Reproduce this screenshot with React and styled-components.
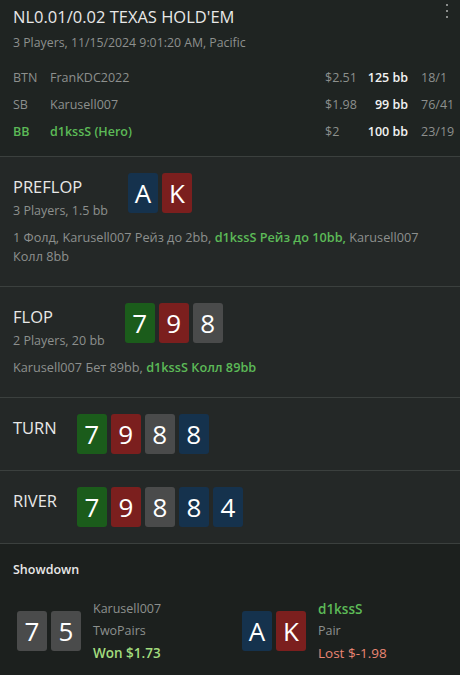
import React from "react"
import styled, { createGlobalStyle } from "styled-components"

const colors = {
  header: "#1f2422",
  street: "#242827",
  showdown: "#1c201e",
  divider: "#3b403e",
  text: "#e8e8e8",
  muted: "#8d908e",
  hero: "#5cba57",
  won: "#a3dd7e",
  lost: "#ea8674",
}

const cardColors = {
  blue: "#15324d",
  red: "#7b1f1e",
  green: "#1b5c1b",
  gray: "#4a4b4b",
}

const GlobalStyle = createGlobalStyle`
  html, body {
    margin: 0;
    padding: 0;
    background: ${colors.street};
  }
  body {
    font-family: "Open Sans", "Noto Sans", sans-serif;
    color: ${colors.text};
  }
`

const Page = styled.div`
  width: 460px;
  height: 675px;
  overflow: hidden;
  display: flex;
  flex-direction: column;
  background: ${colors.street};
`

const Header = styled.header`
  position: relative;
  background: ${colors.header};
  padding: 6px 13px 11px;
  border-bottom: 1px solid ${colors.divider};
`

const Title = styled.h1`
  margin: 0;
  font-size: 16.5px;
  font-weight: 400;
  line-height: 22px;
  color: ${colors.text};
`

const Subtitle = styled.div`
  margin-top: 7px;
  font-size: 12.3px;
  line-height: 16px;
  color: ${colors.muted};
`

const MenuDots = styled.div`
  position: absolute;
  top: 4px;
  right: 12px;
  display: flex;
  flex-direction: column;
  gap: 4px;

  span {
    width: 2px;
    height: 2px;
    background: #8a8d8b;
  }
`

const PlayerTable = styled.div`
  margin-top: 13px;
  display: grid;
  grid-template-columns: 37px 1fr 42px 54px 26px;
  grid-auto-rows: 27px;
  align-items: center;
  font-size: 12.5px;
`

const Cell = styled.div`
  color: ${(p) => (p.hero ? colors.hero : colors.muted)};
  font-weight: ${(p) => (p.hero ? 600 : 400)};
  white-space: nowrap;
`

const BB = styled.div`
  color: #f2f2f2;
  font-weight: 600;
  text-align: right;
  padding-right: 13px;
  white-space: nowrap;
`

const Street = styled.section`
  padding: 16px 13px ${(p) => (p.hasActions ? "20px" : "16px")};
  border-bottom: 1px solid ${colors.divider};
`

const StreetHead = styled.div`
  display: flex;
  align-items: flex-start;
  gap: 20px;
`

const StreetInfo = styled.div`
  padding-top: 3px;
`

const StreetName = styled.div`
  font-size: 16.5px;
  line-height: 22px;
  color: ${colors.text};
`

const StreetSub = styled.div`
  margin-top: 5px;
  font-size: 12.5px;
  line-height: 16px;
  color: ${colors.muted};
`

const Cards = styled.div`
  display: flex;
  gap: 4px;
`

const Card = styled.div`
  width: 30px;
  height: 40px;
  border-radius: 3px;
  background: ${(p) => cardColors[p.suit]};
  color: #fff;
  display: flex;
  align-items: center;
  justify-content: center;
  font-size: 26px;
  line-height: 1;
`

const Actions = styled.div`
  margin-top: 9px;
  padding-right: 22px;
  font-size: 12.7px;
  line-height: 19px;
  color: ${colors.muted};

  b {
    color: ${colors.hero};
    font-weight: 600;
  }
`

const Showdown = styled.section`
  flex: 1;
  background: ${colors.showdown};
  padding: 17px 13px 0;
`

const ShowdownTitle = styled.div`
  font-size: 12.5px;
  font-weight: 600;
  color: ${colors.text};
`

const ShowdownGrid = styled.div`
  margin-top: 20px;
  display: grid;
  grid-template-columns: 225px 1fr;
`

const ShowdownPlayer = styled.div`
  display: flex;
  align-items: center;
  gap: 12px;
  padding-left: 4px;
`

const ShowdownInfo = styled.div`
  display: flex;
  flex-direction: column;
  font-size: 12.5px;
  line-height: 22px;
`

const Line = styled.div`
  color: ${(p) => p.color || colors.muted};
  font-weight: ${(p) => (p.bold ? 600 : 400)};
  font-size: ${(p) => (p.big ? "13.5px" : "12.5px")};
`

const players = [
  { pos: "BTN", name: "FranKDC2022", stack: "$2.51", bb: "125 bb", stat: "18/1" },
  { pos: "SB", name: "Karusell007", stack: "$1.98", bb: "99 bb", stat: "76/41" },
  { pos: "BB", name: "d1kssS (Hero)", stack: "$2", bb: "100 bb", stat: "23/19", hero: true },
]

const streets = [
  {
    name: "PREFLOP",
    sub: "3 Players, 1.5 bb",
    cards: [["A", "blue"], ["K", "red"]],
    actions: (
      <>
        1 Фолд, Karusell007 Рейз до 2bb, <b>d1kssS Рейз до 10bb,</b> Karusell007 Колл 8bb
      </>
    ),
  },
  {
    name: "FLOP",
    sub: "2 Players, 20 bb",
    cards: [["7", "green"], ["9", "red"], ["8", "gray"]],
    actions: (
      <>
        Karusell007 Бет 89bb, <b>d1kssS Колл 89bb</b>
      </>
    ),
  },
  {
    name: "TURN",
    cards: [["7", "green"], ["9", "red"], ["8", "gray"], ["8", "blue"]],
  },
  {
    name: "RIVER",
    cards: [["7", "green"], ["9", "red"], ["8", "gray"], ["8", "blue"], ["4", "blue"]],
  },
]

function CardRow({ cards }) {
  return (
    <Cards>
      {cards.map(([rank, suit], i) => (
        <Card key={i} suit={suit}>{rank}</Card>
      ))}
    </Cards>
  )
}

export default function App() {
  return (
    <Page>
      <GlobalStyle />
      <Header>
        <Title>NL0.01/0.02 TEXAS HOLD'EM</Title>
        <Subtitle>3 Players, 11/15/2024 9:01:20 AM, Pacific</Subtitle>
        <MenuDots>
          <span />
          <span />
          <span />
        </MenuDots>
        <PlayerTable>
          {players.map((p) => (
            <React.Fragment key={p.pos}>
              <Cell hero={p.hero}>{p.pos}</Cell>
              <Cell hero={p.hero}>{p.name}</Cell>
              <Cell>{p.stack}</Cell>
              <BB>{p.bb}</BB>
              <Cell>{p.stat}</Cell>
            </React.Fragment>
          ))}
        </PlayerTable>
      </Header>

      {streets.map((s) => (
        <Street key={s.name} hasActions={!!s.actions}>
          <StreetHead>
            <StreetInfo>
              <StreetName>{s.name}</StreetName>
              {s.sub && <StreetSub>{s.sub}</StreetSub>}
            </StreetInfo>
            <CardRow cards={s.cards} />
          </StreetHead>
          {s.actions && <Actions>{s.actions}</Actions>}
        </Street>
      ))}

      <Showdown>
        <ShowdownTitle>Showdown</ShowdownTitle>
        <ShowdownGrid>
          <ShowdownPlayer>
            <CardRow cards={[["7", "gray"], ["5", "gray"]]} />
            <ShowdownInfo>
              <Line>Karusell007</Line>
              <Line>TwoPairs</Line>
              <Line color={colors.won} bold big>Won $1.73</Line>
            </ShowdownInfo>
          </ShowdownPlayer>
          <ShowdownPlayer>
            <CardRow cards={[["A", "blue"], ["K", "red"]]} />
            <ShowdownInfo>
              <Line color={colors.hero} bold big>d1kssS</Line>
              <Line>Pair</Line>
              <Line color={colors.lost} big>Lost $-1.98</Line>
            </ShowdownInfo>
          </ShowdownPlayer>
        </ShowdownGrid>
      </Showdown>
    </Page>
  )
}
